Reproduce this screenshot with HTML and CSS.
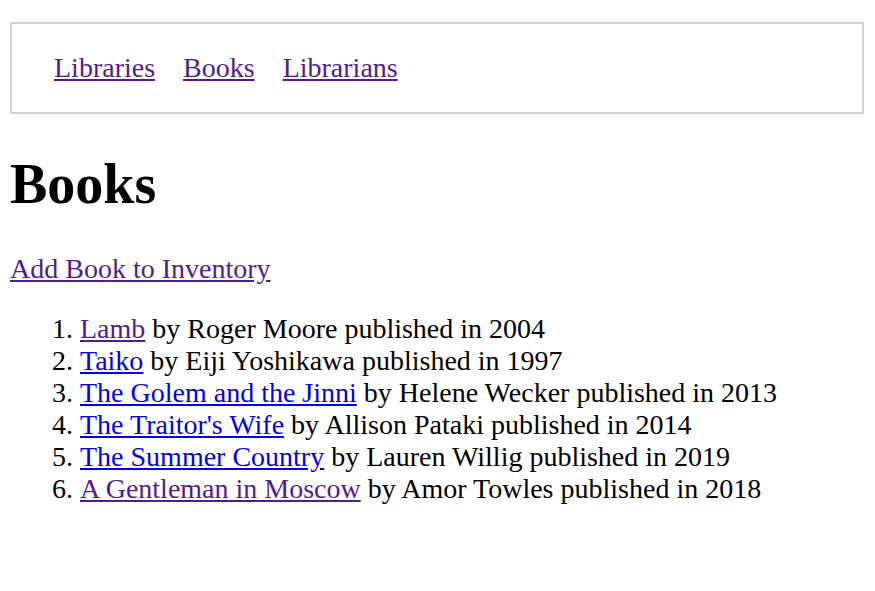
FILE: index.html
```html
<!DOCTYPE html>
<html>
<head>
<meta charset="utf-8">
<title>Books</title>
<link rel="stylesheet" href="styles.css">
</head>
<body>
<nav class="topnav">
  <ul class="navlist">
    <li><a class="visited" href="#">Libraries</a></li>
    <li><a class="visited" href="#">Books</a></li>
    <li><a class="visited" href="#">Librarians</a></li>
  </ul>
</nav>
<h1 class="title">Books</h1>
<p class="add"><a class="visited" href="#">Add Book to Inventory</a></p>
<ol class="books">
  <li><a class="visited" href="#">Lamb</a> by Roger Moore published in 2004</li>
  <li><a class="fresh" href="#">Taiko</a> by Eiji Yoshikawa published in 1997</li>
  <li><a class="fresh" href="#">The Golem and the Jinni</a> by Helene Wecker published in 2013</li>
  <li><a class="fresh" href="#">The Traitor's Wife</a> by Allison Pataki published in 2014</li>
  <li><a class="fresh" href="#">The Summer Country</a> by Lauren Willig published in 2019</li>
  <li><a class="visited" href="#">A Gentleman in Moscow</a> by Amor Towles published in 2018</li>
</ol>
</body>
</html>
```
FILE: styles.css
```css
html, body {
  background: #ffffff;
}
body {
  margin: 22px 11px 0 10px;
  font-family: "Liberation Serif", "Times New Roman", serif;
  font-size: 28px;
  line-height: 32px;
  color: #000000;
}
.topnav {
  border: 2px solid #d3d3d3;
}
.navlist {
  list-style: none;
  margin: 0;
  padding: 28px 0 28px 42px;
  display: flex;
  gap: 28px;
}
.title {
  font-size: 56px;
  line-height: 64px;
  font-weight: bold;
  margin: 37.5px 0;
}
.add {
  margin: 28px 0;
}
.books {
  margin: 28px 0;
  padding-left: 70px;
}
.visited {
  color: #551a8b;
}
.fresh {
  color: #0000ee;
}
```
